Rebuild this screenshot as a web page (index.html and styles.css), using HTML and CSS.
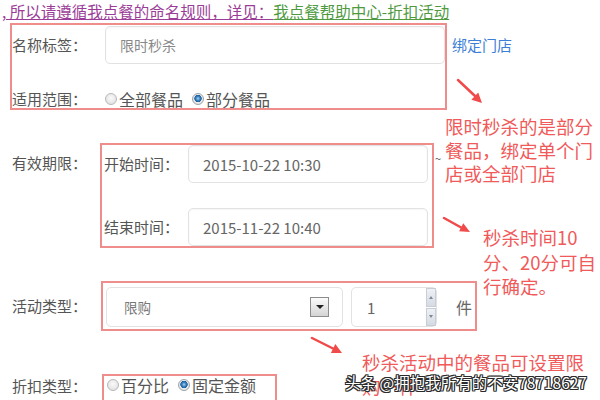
FILE: index.html
```html
<!DOCTYPE html>
<html lang="zh-CN">
<head>
  <meta charset="UTF-8" />
  <title>折扣活动设置</title>
  <link rel="stylesheet" href="styles.css">
</head>
<body>

  <p class="notice"><span class="notice-text">, 所以请遵循我点餐的命名规则，详见：</span><a class="help-link" href="#">我点餐帮助中心-折扣活动</a></p>

  <!-- 名称 + 适用范围 -->
  <div class="row row-first">
    <div class="mark mark-name">
      <div class="line">
        <span class="label">名称标签：</span>
        <input class="field field-name" type="text" placeholder="限时秒杀">
      </div>
      <div class="line line-radio">
        <span class="label">适用范围：</span>
        <span class="radio"></span><span class="opt">全部餐品</span>
        <span class="radio checked"></span><span class="opt">部分餐品</span>
      </div>
    </div>
    <a class="bind-link" href="#">绑定门店</a>
  </div>

  <!-- 有效期限 -->
  <div class="row row-date">
    <span class="label outer">有效期限：</span>
    <div class="mark mark-date">
      <div class="line">
        <span class="sublabel">开始时间：</span>
        <input class="field field-date" type="text" value="2015-10-22 10:30">
      </div>
      <div class="line line-end">
        <span class="sublabel">结束时间：</span>
        <input class="field field-date" type="text" value="2015-11-22 10:40">
      </div>
    </div>
    <span class="tilde">~</span>
  </div>

  <!-- 活动类型 -->
  <div class="row row-type">
    <span class="label outer">活动类型：</span>
    <div class="mark mark-type">
      <div class="select">
        <span>限购</span>
        <span class="select-btn"><i class="caret"></i></span>
      </div>
      <div class="number">
        <span class="number-value">1</span>
        <span class="spin">
          <span class="spin-btn"><i class="spin-up"></i></span>
          <span class="spin-btn"><i class="spin-down"></i></span>
        </span>
      </div>
      <span class="unit">件</span>
    </div>
  </div>

  <!-- 折扣类型 -->
  <div class="row row-discount">
    <span class="label outer">折扣类型：</span>
    <div class="mark mark-discount">
      <span class="radio"></span><span class="opt">百分比</span>
      <span class="radio checked"></span><span class="opt">固定金额</span>
    </div>
  </div>

  <!-- 标注 -->
  <svg class="arrows" width="600" height="400" viewBox="0 0 600 400">
    <g stroke="#f04a4a" stroke-width="2.5" stroke-linecap="round" fill="#f04a4a">
      <line x1="458" y1="80" x2="475" y2="96" />
      <polygon points="482,103 471.4,99.7 478.2,92.5" stroke="none" />
      <line x1="444" y1="218" x2="462" y2="228" />
      <polygon points="470,232 459.1,231.3 463.3,223.3" stroke="none" />
      <line x1="312" y1="338" x2="334" y2="349" />
      <polygon points="342,353 330.9,353 335.3,344" stroke="none" />
    </g>
  </svg>

  <div class="note note-scope">限时秒杀的是部分<br>餐品，绑定单个门<br>店或全部门店</div>
  <div class="note note-time">秒杀时间10<br>分、20分可自<br>行确定。</div>
  <div class="note note-limit">秒杀活动中的餐品可设置限<br>购一件</div>

  <div class="watermark">头条 @拥抱我所有的不安78718627</div>

</body>
</html>
```

FILE: styles.css
```css
* {
  box-sizing: border-box;
}

body {
  margin: 0;
  width: 600px;
  height: 400px;
  overflow: hidden;
  background-color: #fff;
  color: #555;
  font-family: "Noto Sans CJK SC", "Noto Sans", sans-serif;
}

.notice {
  margin: 0;
  height: 23px;
  padding-left: 2px;
  font-size: 15.5px;
  line-height: 22px;
  white-space: nowrap;
}

.notice-text {
  color: #9b3d98;
  text-decoration: underline;
}

.help-link {
  color: #4f9a3f;
}

.row {
  display: flex;
  align-items: flex-start;
  padding-left: 12px;
}

.row-first {
  padding-left: 10px;
}

.row-date,
.row-type {
  margin-top: 33px;
}

.row-discount {
  margin-top: 43px;
}

.mark {
  border: 2px solid #ef8c8c;
}

.line {
  display: flex;
  align-items: center;
}

.label {
  flex: none;
  width: 93px;
  font-size: 15px;
  line-height: 20px;
}

.label.outer {
  width: 88px;
  margin-top: 10px;
}

.row-type .label.outer {
  margin-top: 15px;
}

.row-discount .label.outer {
  margin-top: 2px;
}

.sublabel {
  flex: none;
  width: 84px;
  font-size: 15px;
  line-height: 20px;
}

.field {
  height: 38px;
  padding: 0 0 0 14px;
  border: 1px solid #e2e2e2;
  border-radius: 5px;
  box-shadow: inset 0 1px 2px rgba(0, 0, 0, 0.04);
  font-family: inherit;
  color: #666;
  outline: none;
}

.field::placeholder {
  color: #888;
}

/* name block */
.mark-name {
  width: 437px;
  height: 87px;
  padding-top: 1px;
}

.field-name {
  width: 340px;
  font-size: 14px;
}

.line-radio {
  margin-top: 26px;
  height: 18px;
}

.radio {
  flex: none;
  width: 12px;
  height: 12px;
  margin-right: 2px;
  border: 1px solid #b8b8b8;
  border-radius: 50%;
  background: radial-gradient(circle at 50% 40%, #fafafa 0, #dcdcdc 100%);
}

.radio.checked {
  background: radial-gradient(circle at 50% 45%, #a8d4f2 0, #3a82c2 2px, #1f5f9a 3.4px, #ececec 4px, #d4d4d4 100%);
  border-color: #9aa4ae;
}

.opt {
  margin-right: 9px;
  font-size: 16px;
  line-height: 20px;
}

.bind-link {
  margin: 12px 0 0 5px;
  font-size: 15px;
  line-height: 20px;
  color: #3d7fd6;
  text-decoration: none;
}

/* date block */
.mark-date {
  width: 334px;
  padding: 0 4px 0 2px;
}

.field-date {
  width: 240px;
  font-size: 15px;
}

.line-end {
  margin-top: 25px;
}

.tilde {
  margin: 9px 0 0 1px;
  font-size: 11px;
  line-height: 12px;
  color: #555;
}

/* type block */
.mark-type {
  display: flex;
  align-items: center;
  width: 376px;
  height: 50px;
  margin-left: 1px;
  padding: 4px 0 2px 3px;
}

.select {
  display: flex;
  align-items: center;
  justify-content: space-between;
  width: 237px;
  height: 40px;
  padding: 0 13px 0 17px;
  border: 1px solid #e2e2e2;
  border-radius: 5px;
  font-size: 13.5px;
  color: #777;
}

.select-btn {
  display: flex;
  align-items: center;
  justify-content: center;
  width: 19px;
  height: 20px;
  border: 1px solid #8c8c8c;
  background: linear-gradient(#fbfbfb, #d4d4d4);
}

.caret {
  width: 0;
  height: 0;
  border-left: 4px solid transparent;
  border-right: 4px solid transparent;
  border-top: 4px solid #222;
}

.number {
  display: flex;
  align-items: center;
  justify-content: space-between;
  width: 86px;
  height: 40px;
  margin-left: 8px;
  padding-left: 15px;
  border: 1px solid #e2e2e2;
  border-radius: 5px;
  font-size: 15px;
  color: #666;
}

.spin {
  display: flex;
  flex-direction: column;
  gap: 1px;
  align-self: stretch;
  padding: 0;
}

.spin-btn {
  display: flex;
  align-items: center;
  justify-content: center;
  flex: 1;
  width: 10px;
  border: 1px solid #c9ced6;
  background: linear-gradient(#eef1f5, #d5dbe3);
}

.spin-up,
.spin-down {
  width: 0;
  height: 0;
  border-left: 2.5px solid transparent;
  border-right: 2.5px solid transparent;
}

.spin-up {
  border-bottom: 3px solid #7d8894;
}

.spin-down {
  border-top: 3px solid #7d8894;
}

.unit {
  margin-left: 19px;
  font-size: 16px;
  color: #666;
}

/* discount block */
.mark-discount {
  display: flex;
  align-items: center;
  width: 175px;
  height: 32px;
  margin-left: 2px;
  padding: 0 0 10px 3px;
}

/* annotations */
.arrows {
  position: absolute;
  left: 0;
  top: 0;
  pointer-events: none;
}

.note {
  position: absolute;
  font-size: 18.5px;
  color: #f05a5a;
  white-space: nowrap;
}

.note-scope {
  left: 445px;
  top: 115px;
  line-height: 23.5px;
}

.note-time {
  left: 483px;
  top: 225px;
  line-height: 24.5px;
}

.note-limit {
  left: 362px;
  top: 350px;
  line-height: 24px;
}

.watermark {
  position: absolute;
  left: 345px;
  top: 372px;
  font-size: 15.5px;
  line-height: 20px;
  color: #fff;
  white-space: nowrap;
  text-shadow: 1px 0 #2a2a2a, -1px 0 #2a2a2a, 0 1px #2a2a2a, 0 -1px #2a2a2a,
    1px 1px #2a2a2a, -1px -1px #2a2a2a, 1px -1px #2a2a2a, -1px 1px #2a2a2a;
}
```
